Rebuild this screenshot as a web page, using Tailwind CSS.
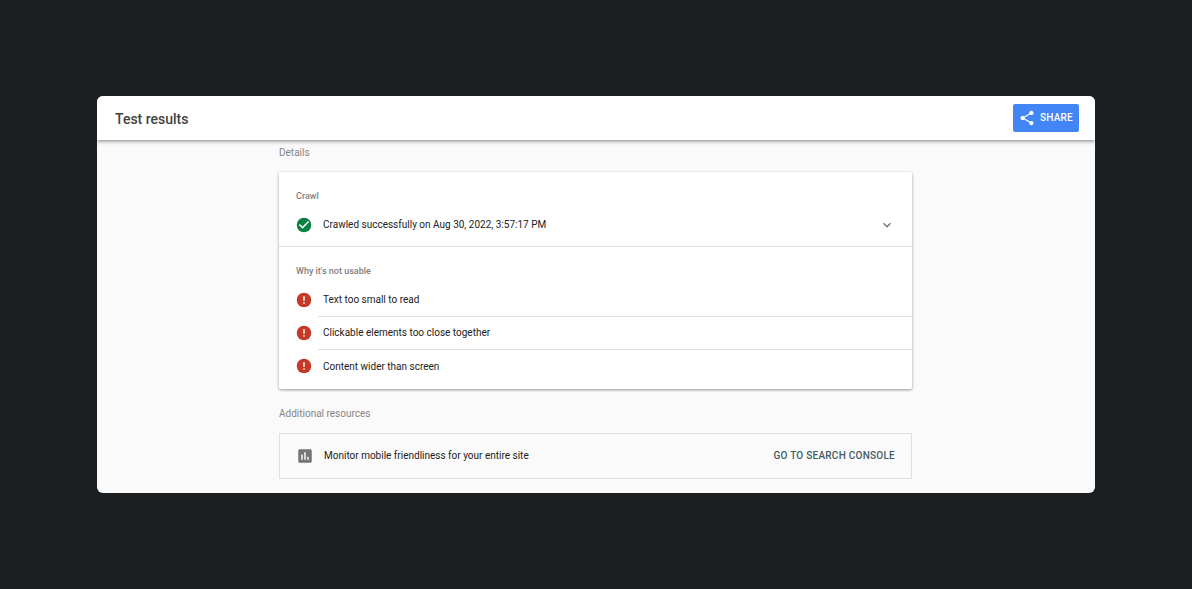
<!DOCTYPE html>
<html lang="en">
  <head>
    <meta charset="UTF-8" />
    <meta name="viewport" content="width=device-width, initial-scale=1.0" />
    <title>Test results</title>
    <script src="https://cdn.jsdelivr.net/npm/@tailwindcss/browser@4"></script>
  </head>
  <body
    class="bg-[#1b1f22] min-h-screen flex items-center px-[97px] font-[Roboto,sans-serif] text-[10px] leading-4 text-[#212121]"
  >
    <div class="w-full bg-[#fafafa] rounded-md overflow-hidden">
      <header
        class="relative h-11 pl-[18px] pr-4 flex items-center justify-between bg-white shadow-[0_1px_4px_rgba(0,0,0,0.5)]"
      >
        <h1 class="pt-px text-sm font-medium text-[#424242]">Test results</h1>
        <button
          type="button"
          class="h-7 px-1.5 flex items-center gap-[5px] rounded-xs bg-[#4285f4] text-white font-medium tracking-wide"
        >
          <svg class="size-4" viewBox="1 1 22 22" fill="currentColor" aria-hidden="true">
            <path d="M18 16.08c-.76 0-1.44.3-1.96.77L8.91 12.7c.05-.23.09-.46.09-.7s-.04-.47-.09-.7l7.05-4.11c.54.5 1.25.81 2.04.81 1.66 0 3-1.34 3-3s-1.34-3-3-3-3 1.34-3 3c0 .24.04.47.09.7L8.04 9.81C7.5 9.31 6.79 9 6 9c-1.66 0-3 1.34-3 3s1.34 3 3 3c.79 0 1.5-.31 2.04-.81l7.12 4.16c-.05.21-.08.43-.08.65 0 1.61 1.31 2.92 2.92 2.92s2.92-1.31 2.92-2.92-1.31-2.92-2.92-2.92z" />
          </svg>
          SHARE
        </button>
      </header>

      <main class="max-w-[634px] mx-auto pt-[5px] pr-px pb-3.5">
        <h2 class="text-[#858585]">Details</h2>

        <div class="mt-[11px] bg-white rounded-xs shadow-[0_1px_3px_rgba(0,0,0,0.4)]">
          <!-- Crawl -->
          <section class="pt-4 border-b border-[#e0e0e0]">
            <h3 class="px-[17px] text-[9px] font-medium text-[#808080]">Crawl</h3>
            <div class="h-[42px] px-[17px] flex items-center">
              <svg class="size-4" viewBox="1 1 22 22" aria-hidden="true">
                <circle cx="12" cy="12" r="10" fill="#0b8043" />
                <path d="M10 17l-5-5 1.41-1.41L10 14.17l7.59-7.59L19 8z" fill="#fff" />
              </svg>
              <p class="ml-[11px] flex-1">Crawled successfully on Aug 30, 2022, 3:57:17 PM</p>
              <button type="button" aria-label="Show crawl details">
                <svg class="size-4" viewBox="0 0 24 24" fill="#757575" aria-hidden="true">
                  <path d="M16.59 8.59L12 13.17 7.41 8.59 6 10l6 6 6-6z" />
                </svg>
              </button>
            </div>
          </section>

          <!-- Usability problems -->
          <section class="pt-4 pb-1.5">
            <h3 class="px-[17px] text-[9px] font-medium text-[#808080]">Why it's not usable</h3>
            <ul class="mt-[5px]">
              <li class="h-[33px] pl-[17px] flex items-center">
                <svg class="size-4 mb-px" viewBox="1 1 22 22" aria-hidden="true">
                  <circle cx="12" cy="12" r="10" fill="#c53929" />
                  <path d="M11 7h2v6h-2zM11 15h2v2h-2z" fill="#fff" />
                </svg>
                <span class="ml-1.5 pl-[5px] h-full flex-1 flex items-center border-b border-[#e0e0e0]">Text too small to read</span>
              </li>
              <li class="h-[33px] pl-[17px] flex items-center">
                <svg class="size-4 mb-px" viewBox="1 1 22 22" aria-hidden="true">
                  <circle cx="12" cy="12" r="10" fill="#c53929" />
                  <path d="M11 7h2v6h-2zM11 15h2v2h-2z" fill="#fff" />
                </svg>
                <span class="ml-1.5 pl-[5px] h-full flex-1 flex items-center border-b border-[#e0e0e0]">Clickable elements too close together</span>
              </li>
              <li class="h-[33px] pl-[17px] flex items-center">
                <svg class="size-4 mb-px" viewBox="1 1 22 22" aria-hidden="true">
                  <circle cx="12" cy="12" r="10" fill="#c53929" />
                  <path d="M11 7h2v6h-2zM11 15h2v2h-2z" fill="#fff" />
                </svg>
                <span class="ml-1.5 pl-[5px] flex-1">Content wider than screen</span>
              </li>
            </ul>
          </section>
        </div>

        <h2 class="mt-[17px] text-[#858585]">Additional resources</h2>

        <div class="mt-[11px] h-[46px] px-4 flex items-center border border-[#e0e0e0]">
          <svg class="size-[18px]" viewBox="0 0 24 24" fill="#757575" aria-hidden="true">
            <path d="M19 3H5c-1.1 0-2 .9-2 2v14c0 1.1.9 2 2 2h14c1.1 0 2-.9 2-2V5c0-1.1-.9-2-2-2zM9 17H7v-7h2v7zm4 0h-2V7h2v10zm4 0h-2v-4h2v4z" />
          </svg>
          <p class="ml-2.5 flex-1">Monitor mobile friendliness for your entire site</p>
          <a href="#" class="font-medium tracking-wide text-[#455a64]">GO TO SEARCH CONSOLE</a>
        </div>
      </main>
    </div>
  </body>
</html>
